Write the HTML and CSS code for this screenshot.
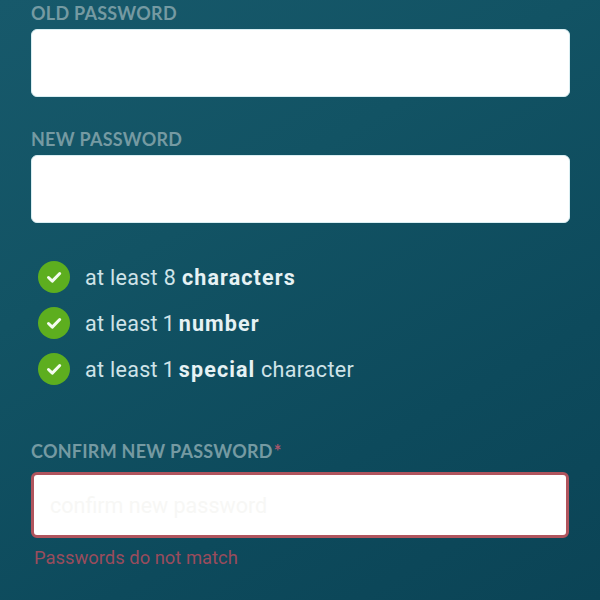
FILE: index.html
```html
<!DOCTYPE html>
<html lang="en">
<head>
<meta charset="utf-8">
<title>Change password</title>
<link rel="stylesheet" href="styles.css">
</head>
<body>
<form class="form">
  <div class="field">
    <label class="label" for="old">OLD PASSWORD</label>
    <input class="input" id="old" type="password">
  </div>
  <div class="field">
    <label class="label" for="new">NEW PASSWORD</label>
    <input class="input" id="new" type="password">
  </div>
  <ul class="rules">
    <li class="rule">
      <svg class="check" viewBox="0 0 32 32" aria-hidden="true"><circle cx="16" cy="16" r="16" fill="#5dae1f"/><path d="M10.5 16.5l3.8 3.6 7.4-7.6" fill="none" stroke="#f4fbef" stroke-width="3" stroke-linecap="round" stroke-linejoin="round"/></svg>
      <span>at least 8 <b>characters</b></span>
    </li>
    <li class="rule">
      <svg class="check" viewBox="0 0 32 32" aria-hidden="true"><circle cx="16" cy="16" r="16" fill="#5dae1f"/><path d="M10.5 16.5l3.8 3.6 7.4-7.6" fill="none" stroke="#f4fbef" stroke-width="3" stroke-linecap="round" stroke-linejoin="round"/></svg>
      <span>at least 1 <b>number</b></span>
    </li>
    <li class="rule">
      <svg class="check" viewBox="0 0 32 32" aria-hidden="true"><circle cx="16" cy="16" r="16" fill="#5dae1f"/><path d="M10.5 16.5l3.8 3.6 7.4-7.6" fill="none" stroke="#f4fbef" stroke-width="3" stroke-linecap="round" stroke-linejoin="round"/></svg>
      <span>at least 1 <b>special</b> character</span>
    </li>
  </ul>
  <div class="field">
    <label class="label label-confirm" for="confirm">CONFIRM NEW PASSWORD<span class="star">*</span></label>
    <input class="input input-error" id="confirm" type="text" placeholder="confirm new password">
    <p class="error">Passwords do not match</p>
  </div>
</form>
</body>
</html>
```
FILE: styles.css
```css
html, body {
  margin: 0;
  height: 600px;
  overflow: hidden;
}
body {
  background: linear-gradient(150deg, #17596b 0%, #125364 35%, #0d4a5c 70%, #0b4456 100%);
  font-family: "Roboto", sans-serif;
}
.form {
  display: flex;
  flex-direction: column;
  padding: 3px 31px 0 31px;
}
.field {
  display: flex;
  flex-direction: column;
}
.field + .field {
  margin-top: 32px;
}
.label {
  font-family: "Lato", sans-serif;
  font-size: 18px;
  font-weight: 700;
  letter-spacing: .25px;
  line-height: 20px;
  height: 26px;
  color: #759aa2;
}
.label-confirm {
  height: 31px;
}
.star {
  margin-left: 1px;
  color: #a9556a;
}
.input {
  box-sizing: border-box;
  width: 538.5px;
  height: 67.5px;
  margin: 0 0 .5px;
  padding: 0 16px;
  border: 1px solid #d9eef2;
  border-radius: 6px;
  background: #fff;
  font-family: "Roboto", sans-serif;
  font-size: 21.5px;
  outline: none;
}
.input-error {
  width: 537.5px;
  height: 66px;
  margin: 0;
  border: 3px solid #b0545d;
}
.input-error::placeholder {
  color: #f7f7f5;
  opacity: 1;
}
.error {
  margin: 9px 0 0 3px;
  font-size: 18.4px;
  line-height: 22px;
  color: #9a4c5c;
}
.rules {
  list-style: none;
  margin: 38px 0 56px;
  padding: 0 0 0 7px;
  display: flex;
  flex-direction: column;
  gap: 14px;
}
.rule {
  display: flex;
  align-items: center;
  gap: 15px;
  height: 32px;
  font-size: 21.5px;
  letter-spacing: .3px;
  font-variant-numeric: proportional-nums;
  color: #cfe3e8;
}
.rule b {
  font-weight: 700;
  letter-spacing: 1.1px;
  color: #e6f2f4;
}
.check {
  width: 32px;
  height: 32px;
  flex: none;
}
```
